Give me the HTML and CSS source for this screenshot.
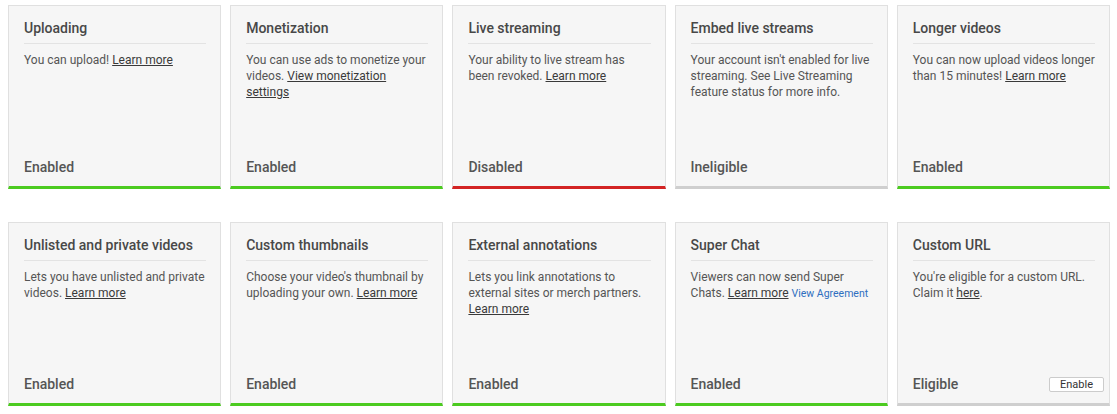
FILE: index.html
```html
<!DOCTYPE html>
<html>
<head>
<meta charset="utf-8">
<link rel="stylesheet" href="styles.css">
</head>
<body>
<div class="grid">
  <div class="card ok">
    <div class="title">Uploading</div>
    <div class="desc">You can upload! <a href="#">Learn more</a></div>
    <div class="status"><span>Enabled</span></div>
  </div>
  <div class="card ok">
    <div class="title">Monetization</div>
    <div class="desc">You can use ads to monetize your videos. <a href="#">View monetization settings</a></div>
    <div class="status"><span>Enabled</span></div>
  </div>
  <div class="card bad">
    <div class="title">Live streaming</div>
    <div class="desc">Your ability to live stream has been revoked. <a href="#">Learn more</a></div>
    <div class="status"><span>Disabled</span></div>
  </div>
  <div class="card na">
    <div class="title">Embed live streams</div>
    <div class="desc">Your account isn't enabled for live streaming. See Live Streaming feature status for more info.</div>
    <div class="status"><span>Ineligible</span></div>
  </div>
  <div class="card ok">
    <div class="title">Longer videos</div>
    <div class="desc">You can now upload videos longer than 15 minutes! <a href="#">Learn more</a></div>
    <div class="status"><span>Enabled</span></div>
  </div>
  <div class="card ok">
    <div class="title">Unlisted and private videos</div>
    <div class="desc">Lets you have unlisted and private videos. <a href="#">Learn more</a></div>
    <div class="status"><span>Enabled</span></div>
  </div>
  <div class="card ok">
    <div class="title">Custom thumbnails</div>
    <div class="desc">Choose your video's thumbnail by uploading your own. <a href="#">Learn more</a></div>
    <div class="status"><span>Enabled</span></div>
  </div>
  <div class="card ok">
    <div class="title">External annotations</div>
    <div class="desc">Lets you link annotations to external sites or merch partners. <a href="#">Learn more</a></div>
    <div class="status"><span>Enabled</span></div>
  </div>
  <div class="card ok">
    <div class="title">Super Chat</div>
    <div class="desc">Viewers can now send Super Chats. <a href="#">Learn more</a> <a class="blue" href="#">View Agreement</a></div>
    <div class="status"><span>Enabled</span></div>
  </div>
  <div class="card na">
    <div class="title">Custom URL</div>
    <div class="desc">You're eligible for a custom URL. Claim it <a href="#">here</a>.</div>
    <div class="status has-btn"><span>Eligible</span><button class="btn">Enable</button></div>
  </div>
</div>
</body>
</html>
```
FILE: styles.css
```css
html, body {
  margin: 0;
  padding: 0;
  background: #fff;
}
body {
  font-family: Roboto, "Liberation Sans", Arial, sans-serif;
  color: #555;
}
.grid {
  display: grid;
  grid-template-columns: repeat(5, 1fr);
  column-gap: 9px;
  row-gap: 33px;
  padding: 5px 7px 0 8px;
}
.card {
  height: 184px;
  box-sizing: border-box;
  background: #f6f6f6;
  border: 1px solid #e0e0e0;
  border-bottom: 3px solid #ccc;
  padding: 12px 14px 0 15px;
  display: flex;
  flex-direction: column;
}
.card.ok { border-bottom-color: #4ccb20; }
.card.bad { border-bottom-color: #d32424; }
.card.na { border-bottom-color: #cfcfcf; }
.title {
  font-size: 14px;
  font-weight: 500;
  line-height: 20px;
  color: #484848;
  padding-bottom: 5px;
  border-bottom: 1px solid #e3e3e3;
}
.desc {
  margin-top: 8px;
  font-size: 12px;
  line-height: 16px;
  color: #555;
  flex: 1;
}
.desc a {
  color: #3a3a3a;
  text-decoration: underline;
}
.desc a.blue {
  color: #2f6fc0;
  text-decoration: none;
  font-size: 10.5px;
}
.status {
  display: flex;
  justify-content: space-between;
  align-items: center;
  font-size: 14px;
  font-weight: 500;
  line-height: 20px;
  color: #555;
  padding-bottom: 9px;
}
.status.has-btn {
  margin-right: -9px;
}
.btn {
  font-family: Roboto, "Liberation Sans", Arial, sans-serif;
  font-size: 11px;
  font-weight: 400;
  color: #333;
  background: #fff;
  border: 1px solid #ccc;
  border-radius: 2px;
  height: 15px;
  width: 55px;
  padding: 0;
  line-height: 13px;
}
```
